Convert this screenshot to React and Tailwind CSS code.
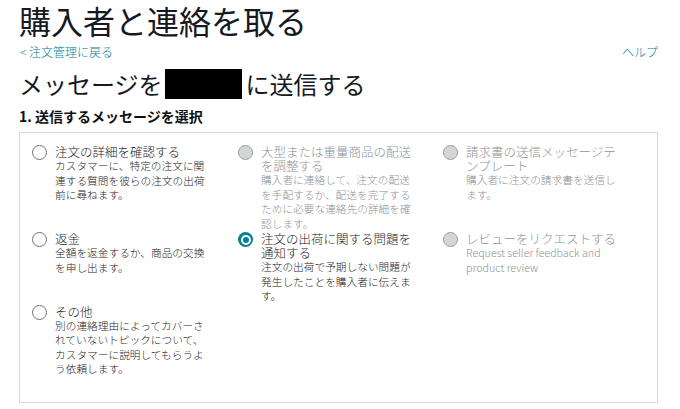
import React from 'react';

const options = [
  {
    id: 'details',
    title: '注文の詳細を確認する',
    desc: 'カスタマーに、特定の注文に関連する質問を彼らの注文の出荷前に尋ねます。',
  },
  {
    id: 'delivery',
    title: '大型または重量商品の配送を調整する',
    desc: '購入者に連絡して、注文の配送を手配するか、配送を完了するために必要な連絡先の詳細を確認します。',
    disabled: true,
  },
  {
    id: 'invoice',
    title: '請求書の送信メッセージテンプレート',
    desc: '購入者に注文の請求書を送信します。',
    disabled: true,
  },
  {
    id: 'refund',
    title: '返金',
    desc: '全額を返金するか、商品の交換を申し出ます。',
  },
  {
    id: 'shipping',
    title: '注文の出荷に関する問題を通知する',
    desc: '注文の出荷で予期しない問題が発生したことを購入者に伝えます。',
    checked: true,
  },
  {
    id: 'review',
    title: 'レビューをリクエストする',
    desc: 'Request seller feedback and product review',
    disabled: true,
  },
  {
    id: 'other',
    title: 'その他',
    desc: '別の連絡理由によってカバーされていないトピックについて、カスタマーに説明してもらうよう依頼します。',
  },
];

function Radio({ checked, disabled }) {
  if (checked) {
    return (
      <span className="flex h-[15px] w-[15px] shrink-0 items-center justify-center rounded-full bg-[#008296]">
        <span className="flex h-[10px] w-[10px] items-center justify-center rounded-full bg-white">
          <span className="h-[6px] w-[6px] rounded-full bg-[#008296]" />
        </span>
      </span>
    );
  }
  if (disabled) {
    return <span className="h-[15px] w-[15px] shrink-0 rounded-full border border-[#9a9c9c] bg-[#d5d6d8]" />;
  }
  return <span className="h-[15px] w-[15px] shrink-0 rounded-full border border-[#6f7373] bg-white" />;
}

function Option({ title, desc, checked, disabled }) {
  return (
    <label className="flex items-start gap-[8px] font-light">
      <Radio checked={checked} disabled={disabled} />
      <div className={`w-[153px] ${disabled ? 'text-[#8f9294]' : 'text-[#1f2323]'}`}>
        <div className="text-[12.5px] leading-[14px]">{title}</div>
        <div className="text-[10.7px] leading-[14.5px]">{desc}</div>
      </div>
    </label>
  );
}

export default function App() {
  return (
    <div
      className="bg-white pl-[19px] pr-[22px] text-[#0f1111]"
      style={{ fontFamily: '"Noto Sans CJK JP", "Noto Sans", sans-serif' }}
    >
      <h1 className="text-[32px] leading-[40px] font-normal text-[#16191f]">購入者と連絡を取る</h1>

      <div className="mt-[4px] flex items-center justify-between text-[12px] leading-[16px] font-light text-[#008296]">
        <a href="#" className="pl-[1px]">&lt; 注文管理に戻る</a>
        <a href="#">ヘルプ</a>
      </div>

      <h2 className="mt-[8px] flex items-center text-[24px] leading-[32px] font-normal text-[#16191f]">
        <span>メッセージを</span>
        <span className="mx-[2px] inline-block h-[30px] w-[77px] bg-black" />
        <span className="ml-[2px]">に送信する</span>
      </h2>

      <div className="mt-[6px] text-[14px] leading-[20px] font-bold">1. 送信するメッセージを選択</div>

      <div className="mt-[6px] border border-[#d5d9d9] pt-[12px] pb-[25px] pl-[12px]">
        <div className="grid grid-cols-[206px_205px_205px] gap-y-[1px]">
          {options.map((o) => (
            <Option key={o.id} {...o} />
          ))}
        </div>
      </div>
    </div>
  );
}
